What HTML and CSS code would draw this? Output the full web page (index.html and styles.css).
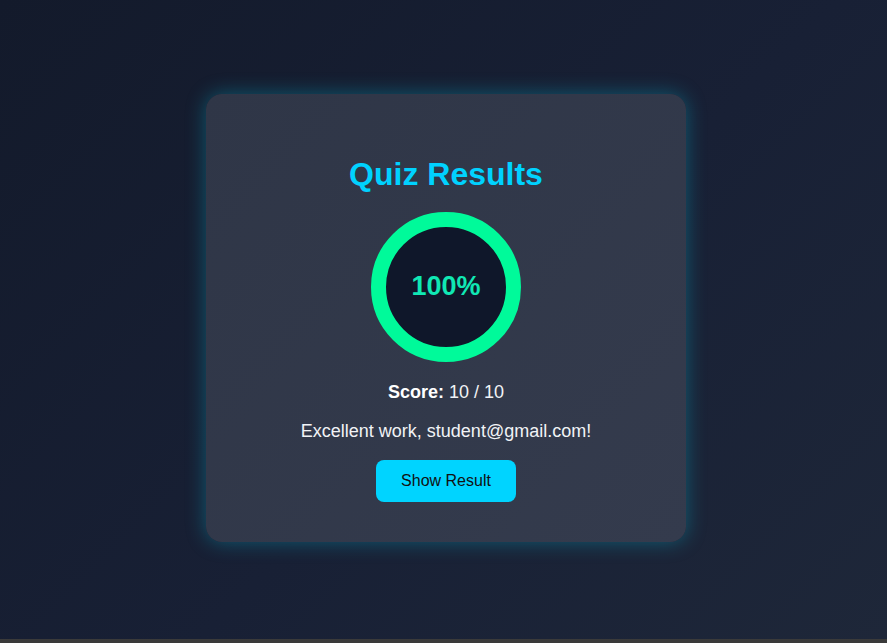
FILE: index.html
```html
<!DOCTYPE html>
<html lang="en">
<head>
<meta charset="utf-8">
<title>Quiz Results</title>
<link rel="stylesheet" href="styles.css">
</head>
<body>
<main class="page">
  <section class="card">
    <h2 class="title">Quiz Results</h2>
    <div class="ring">
      <div class="ring-inner">100%</div>
    </div>
    <p class="score"><strong>Score:</strong> 10 / 10</p>
    <p class="message">Excellent work, student@gmail.com!</p>
    <button class="btn" type="button">Show Result</button>
  </section>
</main>
</body>
</html>
```

FILE: styles.css
```css
html {
  background: #3a3a3a;
  margin: 0;
  padding: 0;
}
body {
  margin: 0;
  font-family: "Liberation Sans", Arial, sans-serif;
}
.page {
  height: 639px;
  box-sizing: border-box;
  padding-left: 5px;
  padding-bottom: 4px;
  display: flex;
  align-items: center;
  justify-content: center;
  background: linear-gradient(135deg, #131a2b 0%, #182035 55%, #1e2739 100%);
}
.card {
  width: 480px;
  box-sizing: border-box;
  padding: 40px 40px 40px;
  border-radius: 16px;
  background: linear-gradient(135deg, #2f3647 0%, #343b4d 100%);
  box-shadow: 0 0 20px rgba(0, 200, 230, 0.35);
  text-align: center;
  color: #f1f3f6;
}
.title {
  margin: 22px 0 19px;
  font-size: 32px;
  font-weight: 700;
  color: #00d2ff;
}
.ring {
  width: 150px;
  height: 150px;
  margin: 0 auto 20px;
  box-sizing: border-box;
  border: 15px solid #00fa9a;
  border-radius: 50%;
  background: #0f172a;
  display: flex;
  align-items: center;
  justify-content: center;
}
.ring-inner {
  font-size: 27px;
  font-weight: 700;
  color: #10e8b4;
}
.score,
.message {
  margin: 18px 0;
  font-size: 18px;
}
.score strong {
  font-weight: 700;
  color: #ffffff;
}
.btn {
  display: inline-block;
  margin: 0;
  padding: 12px 25px;
  border: none;
  border-radius: 8px;
  background: #00d4ff;
  color: #111;
  font-family: "Liberation Sans", Arial, sans-serif;
  font-size: 16px;
  line-height: 18px;
  cursor: pointer;
}
```
